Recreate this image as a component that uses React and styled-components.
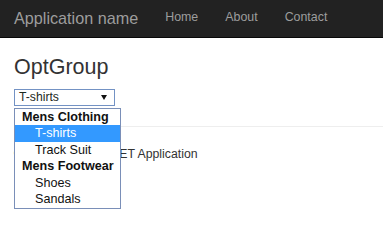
import React from 'react';
import styled, { createGlobalStyle } from 'styled-components';

const GlobalStyle = createGlobalStyle`
  html, body {
    margin: 0;
    padding: 0;
    background: #fff;
  }
  body {
    font-family: "Liberation Sans", Arial, sans-serif;
    color: #333;
  }
  #root {
    min-height: 100vh;
  }
`;

const Navbar = styled.nav`
  display: flex;
  align-items: center;
  height: 37px;
  background: #222;
  border-bottom: 1px solid #080808;
  padding: 0 14px;
`;

const Brand = styled.a`
  font-size: 16.2px;
  color: #9d9d9d;
  text-decoration: none;
  margin-right: 27px;
  margin-top: -1px;
`;

const NavLink = styled.a`
  font-size: 12.4px;
  color: #9d9d9d;
  text-decoration: none;
  margin-right: 27px;
  margin-top: -4px;
`;

const Container = styled.div`
  padding: 0 14px;
`;

const Title = styled.h2`
  font-size: 21.5px;
  font-weight: 400;
  line-height: 1.1;
  margin: 18px 0 9px;
  color: #333;
`;

const SelectWrap = styled.div`
  position: relative;
  width: 101px;
  z-index: 2;
`;

const SelectBox = styled.div`
  box-sizing: border-box;
  display: flex;
  align-items: center;
  justify-content: space-between;
  height: 17px;
  border: 1px solid #7392c4;
  padding: 0 7px 0 4px;
  font-size: 12.2px;
  color: #1e2a1e;
`;

const Arrow = styled.span`
  width: 0;
  height: 0;
  border-left: 3px solid transparent;
  border-right: 3px solid transparent;
  border-top: 5px solid #111;
  margin-top: 1px;
`;

const Dropdown = styled.ul`
  position: absolute;
  top: calc(100% + 2px);
  left: 0;
  box-sizing: border-box;
  width: 107px;
  margin: 0;
  padding: 0;
  list-style: none;
  background: #fff;
  border: 1px solid #7a8fb8;
`;

const Item = styled.li`
  height: 16.5px;
  line-height: 16.5px;
  font-size: 12.6px;
  white-space: nowrap;
  padding-left: ${p => (p.$group ? '7px' : '20px')};
  font-weight: ${p => (p.$group ? 700 : 400)};
  background: ${p => (p.$selected ? '#3399ff' : 'transparent')};
  color: ${p => (p.$selected ? '#fff' : '#111')};
`;

const Rule = styled.hr`
  border: 0;
  border-top: 1px solid #eee;
  margin: 20px -14px 0 0;
`;

const Footer = styled.p`
  font-size: 12.3px;
  line-height: 17.6px;
  margin: 19px 0 0;
  color: #333;
`;

const options = [
  { label: 'Mens Clothing', group: true },
  { label: 'T-shirts', selected: true },
  { label: 'Track Suit' },
  { label: 'Mens Footwear', group: true },
  { label: 'Shoes' },
  { label: 'Sandals' },
];

export default function App() {
  return (
    <>
      <GlobalStyle />
      <Navbar>
        <Brand>Application name</Brand>
        <NavLink>Home</NavLink>
        <NavLink>About</NavLink>
        <NavLink>Contact</NavLink>
      </Navbar>
      <Container>
        <Title>OptGroup</Title>
        <SelectWrap>
          <SelectBox>
            <span>T-shirts</span>
            <Arrow />
          </SelectBox>
          <Dropdown>
            {options.map(o => (
              <Item key={o.label} $group={o.group} $selected={o.selected}>
                {o.label}
              </Item>
            ))}
          </Dropdown>
        </SelectWrap>
        <Rule />
        <Footer>© 2016 - My ASP.NET Application</Footer>
      </Container>
    </>
  );
}
